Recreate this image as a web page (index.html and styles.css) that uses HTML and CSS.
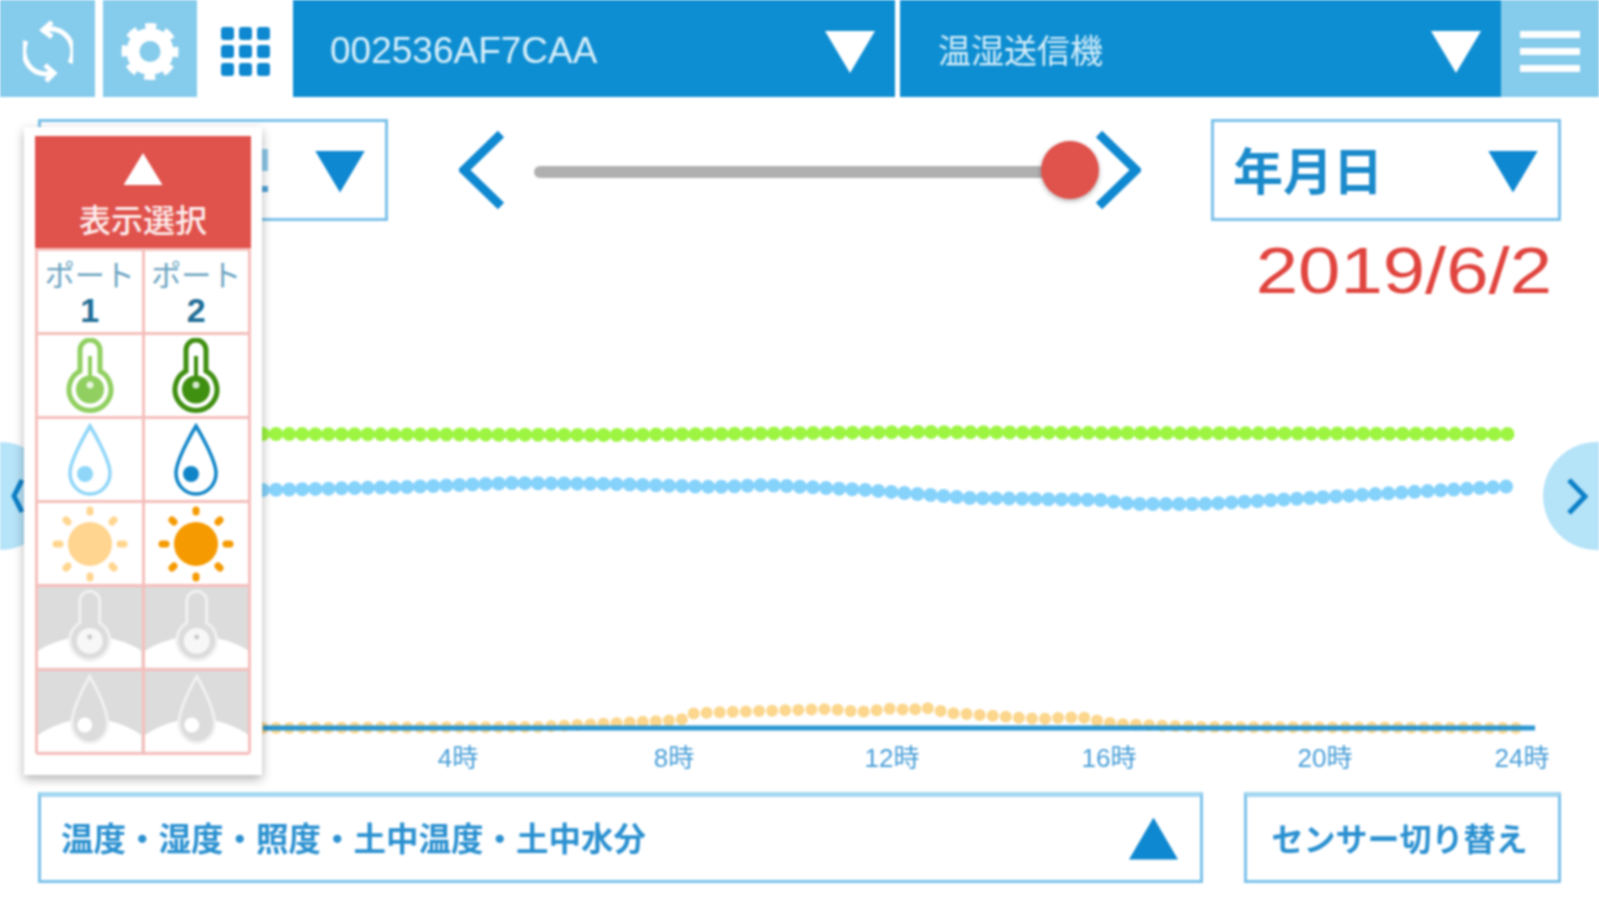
FILE: index.html
```html
<!DOCTYPE html>
<html lang="ja">
<head>
    <meta charset="UTF-8">
    <meta name="viewport" content="width=device-width, initial-scale=1.0">
    <title>センサーグラフ</title>
    <link rel="stylesheet" href="styles.css">
</head>
<body>
    <svg class="defs" width="0" height="0">
        <symbol id="thermo" viewBox="0 0 48 76">
            <path d="M14 33 V12 a10 10 0 0 1 20 0 V33 a21 21 0 1 1 -20 0 Z" fill="none" stroke="currentColor" stroke-width="5"/>
            <line x1="24" y1="18" x2="24" y2="44" stroke="currentColor" stroke-width="4"/>
            <circle cx="24" cy="51.500" r="14" fill="currentColor"/>
            <circle cx="24" cy="47" r="3.500" fill="#fff" opacity="0.800"/>
        </symbol>
        <symbol id="drop" viewBox="0 0 46 74">
            <path d="M23 3 C23 3 43 36 43 50 A20 21 0 0 1 3 50 C3 36 23 3 23 3 Z" fill="none" stroke="currentColor" stroke-width="3.500"/>
            <circle cx="18" cy="51" r="8" fill="currentColor"/>
        </symbol>
        <symbol id="sun" viewBox="0 0 76 76">
            <circle cx="38" cy="38" r="22" fill="currentColor"/>
            <g stroke="currentColor" stroke-width="7" stroke-linecap="round">
                <line x1="38" y1="4" x2="38" y2="6"/>
                <line x1="38" y1="70" x2="38" y2="72"/>
                <line x1="4" y1="38" x2="8" y2="38"/>
                <line x1="68" y1="38" x2="72" y2="38"/>
                <line x1="14" y1="14" x2="16" y2="16"/>
                <line x1="60" y1="16" x2="62" y2="14"/>
                <line x1="14" y1="62" x2="16" y2="60"/>
                <line x1="60" y1="60" x2="62" y2="62"/>
            </g>
        </symbol>
        <symbol id="thermo-off" viewBox="0 0 104 81">
            <path d="M0 64 Q14 54 42 49 L62 49 Q90 54 104 64 V81 H0 Z" fill="#fff"/>
            <path d="M42 36 V14 a10 10 0 0 1 20 0 V36 a20 20 0 1 1 -20 0 Z" fill="#dcdcdc" stroke="#f1f1f1" stroke-width="3"/>
            <circle cx="52" cy="54" r="13" fill="#f7f7f7"/>
            <circle cx="52" cy="50" r="2.500" fill="#c9c9c9"/>
        </symbol>
        <symbol id="drop-off" viewBox="0 0 104 81">
            <path d="M0 64 Q14 54 36 49 L68 49 Q90 54 104 64 V81 H0 Z" fill="#fff"/>
            <path d="M52 5 C52 5 70 36 70 52 A18 20 0 0 1 34 52 C34 36 52 5 52 5 Z" fill="#dcdcdc" stroke="#f1f1f1" stroke-width="3"/>
            <circle cx="47" cy="54" r="7.500" fill="#fff"/>
        </symbol>
    </svg>

    <div class="app">
        <header class="topbar">
            <div class="tile tile-sync">
                <svg width="50" height="63" viewBox="0 0 50 63" fill="none" stroke="#fff" stroke-width="5">
                    <path d="M21 10 A22 23 0 0 1 47 43"/>
                    <path d="M29 2 L20 10 L29 17"/>
                    <path d="M3 21 A22 23 0 0 0 29 53"/>
                    <path d="M22 45 L31 53 L23 61"/>
                </svg>
            </div>
            <div class="tile tile-gear">
                <svg width="58" height="59" viewBox="-29 -29.500 58 59" fill="none" stroke="#fff">
                    <circle r="17" stroke-width="13"/>
                    <circle r="24" stroke-width="9" stroke-dasharray="10.500 8.350" stroke-dashoffset="5.250"/>
                </svg>
            </div>
            <div class="tile tile-grid">
                <span></span><span></span><span></span>
                <span></span><span></span><span></span>
                <span></span><span></span><span></span>
            </div>
            <div class="picker picker-id">
                <span class="picker-text">002536AF7CAA</span>
                <span class="tri tri-down tri-white"></span>
            </div>
            <div class="picker picker-name">
                <span class="picker-text">温湿送信機</span>
                <span class="tri tri-down tri-white"></span>
            </div>
            <div class="tile tile-menu">
                <span></span><span></span><span></span>
            </div>
        </header>

        <section class="controls">
            <div class="select select-left">
                <span class="peek"></span>
                <span class="tri tri-down"></span>
            </div>
            <div class="slider">
                <svg class="chevron" width="46" height="80" viewBox="0 0 46 80" fill="none" stroke="#0e88d0" stroke-width="9">
                    <path d="M42 4 L5 40 L42 76"/>
                </svg>
                <div class="track"><span class="knob"></span></div>
                <svg class="chevron" width="46" height="80" viewBox="0 0 46 80" fill="none" stroke="#0e88d0" stroke-width="9">
                    <path d="M4 4 L41 40 L4 76"/>
                </svg>
            </div>
            <div class="select">
                <span class="select-text">年月日</span>
                <span class="tri tri-down"></span>
            </div>
        </section>

        <div class="date"><span class="date-text">2019/6/2</span></div>

        <svg class="chart" width="1599" height="470" viewBox="0 310 1599 470">
            <polyline class="dots dots-green" points="263,434 612,435 918,432 1122,433 1517,434"/>
            <polyline class="dots dots-blue" points="263,490 408,487 510,483 612,484 714,487 765,485 867,490 969,498 1101,500 1132,504 1203,504 1275,500 1377,494 1517,486"/>
            <polyline class="dots dots-yellow" points="263,728 537,727 600,724 680,720 695,713 760,711 829,709 860,712 896,708 910,711 922,707 950,713 996,716 1038,719 1080,717 1115,724 1200,727 1522,728"/>
            <line class="axis" x1="263" y1="728" x2="1535" y2="728"/>
            <text class="tick" x="458" y="767">4時</text>
            <text class="tick" x="674" y="767">8時</text>
            <text class="tick" x="892" y="767">12時</text>
            <text class="tick" x="1109" y="767">16時</text>
            <text class="tick" x="1325" y="767">20時</text>
            <text class="tick" x="1522" y="767">24時</text>
        </svg>

        <section class="bottom">
            <div class="box box-wide">
                <span>温度・湿度・照度・土中温度・土中水分</span>
                <span class="tri tri-up"></span>
            </div>
            <div class="box box-switch">センサー切り替え</div>
        </section>

        <div class="side side-left">
            <svg width="13" height="40" viewBox="0 0 13 40" fill="none" stroke="#0d80c8" stroke-width="5"><path d="M11 4 L3 20 L11 36"/></svg>
        </div>
        <div class="side side-right">
            <svg width="21" height="37" viewBox="0 0 21 37" fill="none" stroke="#0d80c8" stroke-width="5"><path d="M2 2 L18 18.500 L2 35"/></svg>
        </div>

        <aside class="panel">
            <div class="panel-head">
                <span class="tri tri-up tri-white tri-small"></span>
                <span class="panel-title">表示選択</span>
            </div>
            <div class="panel-grid">
                <div class="cell port">ポート<b>1</b></div>
                <div class="cell port">ポート<b>2</b></div>
                <div class="cell"><svg class="ic-thermo ic-green-light"><use href="#thermo"/></svg></div>
                <div class="cell"><svg class="ic-thermo ic-green"><use href="#thermo"/></svg></div>
                <div class="cell"><svg class="ic-drop ic-blue-light"><use href="#drop"/></svg></div>
                <div class="cell"><svg class="ic-drop ic-blue"><use href="#drop"/></svg></div>
                <div class="cell"><svg class="ic-sun ic-orange-light"><use href="#sun"/></svg></div>
                <div class="cell"><svg class="ic-sun ic-orange"><use href="#sun"/></svg></div>
                <div class="cell off"><svg class="ic-off"><use href="#thermo-off"/></svg></div>
                <div class="cell off"><svg class="ic-off"><use href="#thermo-off"/></svg></div>
                <div class="cell off"><svg class="ic-off"><use href="#drop-off"/></svg></div>
                <div class="cell off"><svg class="ic-off"><use href="#drop-off"/></svg></div>
            </div>
        </aside>
    </div>
</body>
</html>
```

FILE: styles.css
```css
/* General Styles */
html, body {
    margin: 0;
    padding: 0;
    height: 100%;
    overflow: hidden;
    background-color: #fff;
}

body {
    font-family: "Liberation Sans", "Noto Sans CJK JP", sans-serif;
}

.defs {
    position: absolute;
}

/* the source is a low-res capture, so everything is slightly soft */
.app {
    position: relative;
    width: 1599px;
    height: 900px;
    overflow: hidden;
    filter: blur(1.1px);
}

/* Top bar */
.topbar {
    display: flex;
    height: 97px;
}

.tile {
    display: flex;
    align-items: center;
    justify-content: center;
    box-sizing: border-box;
    padding-top: 6px;
    background-color: #85cbeb;
}

.tile-sync {
    width: 95px;
    margin-right: 8px;
}

.tile-gear {
    width: 94px;
}

.tile-grid {
    width: 96px;
    background-color: #fff;
    display: grid;
    grid-template-columns: repeat(3, 13px);
    grid-auto-rows: 13px;
    gap: 5px;
    align-items: stretch;
    align-content: center;
    justify-content: center;
}

.tile-grid span {
    background-color: #0e88d0;
    border-radius: 3px;
}

.tile-menu {
    width: 98px;
    flex-direction: column;
    gap: 10px;
}

.tile-menu span {
    display: block;
    width: 60px;
    height: 7px;
    background-color: #fff;
}

.picker {
    display: flex;
    align-items: center;
    justify-content: space-between;
    background-color: #0e8ed2;
    color: #d6eefa;
}

.picker .tri {
    margin-top: 7px;
}

.picker-id {
    width: 602px;
    padding: 0 20px 0 37px;
    margin-right: 5px;
    box-sizing: border-box;
    font-size: 37px;
}

.picker-id .picker-text {
    padding-top: 4px;
}

.picker-name {
    width: 601px;
    padding: 0 20px 0 38px;
    box-sizing: border-box;
    font-size: 33px;
}

/* Triangles */
.tri {
    display: block;
    width: 50px;
    height: 42px;
    flex: none;
    background-color: #0e88d0;
    clip-path: polygon(0 0, 100% 0, 50% 100%);
}

.tri-up {
    clip-path: polygon(50% 0, 100% 100%, 0 100%);
}

.tri-white {
    background-color: #fff;
}

.tri-small {
    width: 39px;
    height: 32px;
}

/* Controls */
.controls {
    display: flex;
    justify-content: space-between;
    margin-top: 22px;
    padding: 0 38px;
}

.select {
    position: relative;
    display: flex;
    align-items: center;
    justify-content: space-between;
    width: 350px;
    height: 102px;
    box-sizing: border-box;
    padding: 0 20px 0 19px;
    border: 3px solid #7cc2ea;
    color: #1a8acb;
    font-size: 50px;
    font-weight: 700;
}

.select-left {
    justify-content: flex-end;
}

.select .tri {
    margin-top: 3px;
}

.select-text {
    margin-top: -5px;
}

/* end of a label that sticks out past the overlay panel */
.peek {
    position: absolute;
    left: 221px;
    top: 27px;
    width: 6px;
    height: 22px;
    background-color: #8cc8ea;
}

.peek::after {
    content: "";
    position: absolute;
    left: 0;
    top: 37px;
    width: 6px;
    height: 6px;
    background-color: #4fa3d8;
}

.slider {
    display: flex;
    align-items: center;
    width: 682px;
}

.track {
    position: relative;
    flex: 1;
    height: 12px;
    margin: 4px 25px 0 29px;
    background-color: #b0b0b0;
    border-radius: 6px;
}

.knob {
    position: absolute;
    top: -25px;
    right: -29px;
    width: 58px;
    height: 58px;
    border-radius: 50%;
    background-color: #e0524c;
    box-shadow: 0 2px 5px rgba(0, 0, 0, 0.3);
}

.date {
    height: 89px;
    padding-right: 47px;
    text-align: right;
    line-height: 100px;
    font-size: 64px;
    color: #e0443e;
}

/* the capture is stretched sideways, the numerals show it */
.date-text {
    display: inline-block;
    transform: scaleX(1.19);
    transform-origin: right center;
}

/* Chart */
.chart {
    display: block;
}

.dots {
    fill: none;
    stroke-width: 14;
    stroke-linecap: round;
    stroke-dasharray: 0 13.1;
}

.dots-green {
    stroke: #9df542;
}

.dots-blue {
    stroke: #85d2fb;
}

.dots-yellow {
    stroke: #fbd68c;
    stroke-width: 12;
}

.axis {
    stroke: #2a96d2;
    stroke-width: 5;
}

.tick {
    font-size: 26px;
    fill: #4a9fd8;
    text-anchor: middle;
}

/* Bottom row */
.bottom {
    display: flex;
    justify-content: space-between;
    margin-top: 12px;
    padding: 0 38px;
}

.box {
    display: flex;
    align-items: center;
    height: 91px;
    box-sizing: border-box;
    padding-bottom: 4px;
    border: 3px solid #7cc2ea;
    border-top: 5px solid #a6d8f1;
    color: #2a90d0;
    font-size: 32.500px;
    font-weight: 700;
}

.box-wide {
    width: 1165px;
    justify-content: space-between;
    padding-left: 20px;
    padding-right: 22px;
}

.box-wide .tri {
    width: 49px;
    margin-top: 4px;
}

.box-switch {
    width: 317px;
    justify-content: center;
    padding-right: 6px;
    font-size: 32px;
}

/* Side page buttons */
.side {
    position: absolute;
    top: 442px;
    width: 108px;
    height: 108px;
    display: flex;
    align-items: center;
    box-sizing: border-box;
    border-radius: 50%;
    background-color: #b5e3f8;
}

.side-left {
    left: -54px;
    padding-left: 65px;
}

.side-right {
    left: 1543px;
    padding-left: 24px;
}

/* Overlay panel */
.panel {
    position: absolute;
    top: 127px;
    left: 24px;
    width: 238px;
    height: 648px;
    box-sizing: border-box;
    padding: 9px 11px;
    background-color: #fff;
    box-shadow: 0 4px 10px rgba(0, 0, 0, 0.3);
}

.panel-head {
    display: flex;
    flex-direction: column;
    align-items: center;
    justify-content: flex-end;
    gap: 20px;
    height: 112px;
    box-sizing: border-box;
    padding-bottom: 11px;
    background-color: #e0524c;
    color: #fdeeee;
}

.panel-title {
    font-size: 32px;
    line-height: 32px;
    font-weight: 500;
}

.panel-grid {
    display: grid;
    grid-template-columns: repeat(2, 1fr);
    grid-auto-rows: 81px;
    gap: 3px;
    padding: 3px;
    background-color: #f5bfbd;
    border-radius: 0 0 4px 4px;
}

.cell {
    display: flex;
    align-items: center;
    justify-content: center;
    background-color: #fff;
    overflow: hidden;
}

.port {
    flex-direction: column;
    padding-top: 2px;
    font-size: 30px;
    line-height: 34px;
    color: #6aa3c0;
    white-space: nowrap;
}

.port b {
    color: #1f6d96;
    font-size: 34px;
}

.off {
    background-color: #dcdcdc;
}

.ic-thermo {
    width: 48px;
    height: 76px;
}

.ic-drop {
    width: 48px;
    height: 74px;
}

.ic-sun {
    width: 76px;
    height: 76px;
}

.ic-off {
    width: 100%;
    height: 100%;
}

.ic-green-light { color: #90cf60; }
.ic-green { color: #3f8f10; }
.ic-blue-light { color: #8fd6f8; }
.ic-blue { color: #0f85c8; }
.ic-orange-light { color: #ffd58f; }
.ic-orange { color: #f59a00; }
```
